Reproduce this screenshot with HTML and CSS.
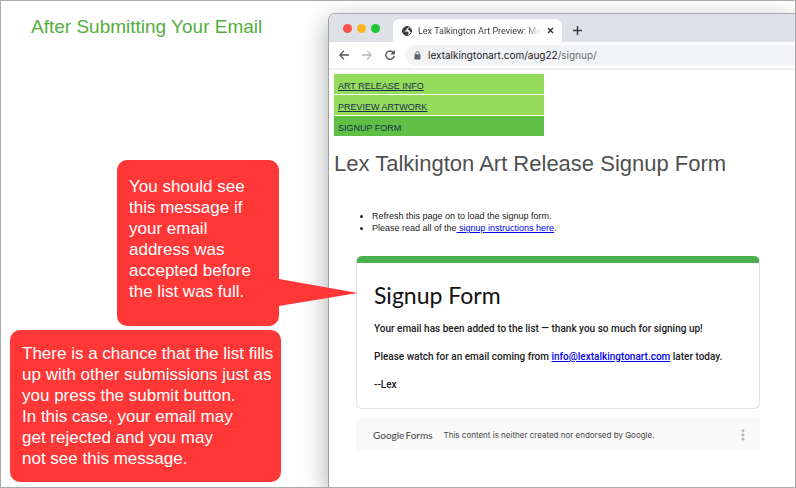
FILE: index.html
```html
<!DOCTYPE html>
<html lang="en">
<head>
    <meta charset="utf-8">
    <title>After Submitting Your Email</title>
    <link rel="stylesheet" href="styles.css">
</head>
<body>
    <div class="slide">
        <div class="notes">
            <h1 class="notes-title">After Submitting Your Email</h1>
            <div class="callout callout-success">
                You should see<br>this message if<br>your email<br>address was<br>accepted before<br>the list was full.
                <svg class="pointer" width="79" height="28" viewBox="0 0 79 28"><path d="M0 0L79 14L0 27Z" fill="#ff3737"/></svg>
            </div>
            <div class="callout callout-warning">
                There is a chance that the list fills<br>up with other submissions just as<br>you press the submit button.<br>In this case, your email may<br>get rejected and you may<br>not see this message.
            </div>
        </div>

        <div class="browser">
            <div class="tab-bar">
                <div class="lights">
                    <span class="light red"></span>
                    <span class="light yellow"></span>
                    <span class="light green"></span>
                </div>
                <div class="tab">
                    <svg width="10" height="10" viewBox="0 0 20 20"><circle cx="10" cy="10" r="9" fill="#fff" stroke="#3c4043" stroke-width="2"/><path d="M2 6C4 2 8 1 12 1V4L9 6V9H6L5 11H11L13 13V16L10 19C4 19 0 14 1 9ZM14 2L18 6L19 12H16L15 9L12 8L13 5Z" fill="#3c4043"/></svg>
                    <span class="tab-title">Lex Talkington Art Preview: Ma</span>
                    <button class="icon-btn" aria-label="Close tab"><svg width="7" height="7" viewBox="0 0 7 7"><path d="M1 1L6 6M6 1L1 6" stroke="#303236" stroke-width="1.4"/></svg></button>
                </div>
                <button class="icon-btn new-tab" aria-label="New tab"><svg width="9" height="9" viewBox="0 0 9 9"><path d="M4.5 0V9M0 4.5H9" stroke="#3c4043" stroke-width="1.5"/></svg></button>
            </div>
            <div class="toolbar">
                <button class="icon-btn" aria-label="Back"><svg width="10" height="10" viewBox="0 0 10 10" fill="none" stroke="#505357" stroke-width="1.3"><path d="M10 5H1M5 .6L.8 5L5 9.4"/></svg></button>
                <button class="icon-btn" aria-label="Forward"><svg width="10" height="10" viewBox="0 0 10 10" fill="none" stroke="#b5b7ba" stroke-width="1.3"><path d="M0 5H9M5 .6L9.2 5L5 9.4"/></svg></button>
                <button class="icon-btn" aria-label="Reload"><svg width="10" height="10" viewBox="0 0 10 10" fill="none"><path d="M8.6 2.9A4.2 4.2 0 1 0 9.2 6" stroke="#505357" stroke-width="1.4"/><path d="M9.8 0V4.4H5.4Z" fill="#505357"/></svg></button>
                <div class="address">
                    <svg width="7" height="9" viewBox="0 0 7 9"><rect x="0.5" y="3.3" width="6" height="5.2" rx="0.6" fill="#5f6368"/><path d="M1.8 3.5V2.3A1.7 1.7 0 0 1 5.2 2.3V3.5" fill="none" stroke="#5f6368"/></svg>
                    <span class="url">lextalkingtonart.com/aug22<span class="path">/signup/</span></span>
                </div>
            </div>

            <div class="page">
                <nav class="menu">
                    <a href="#">ART RELEASE INFO</a>
                    <a href="#">PREVIEW ARTWORK</a>
                    <a class="current">SIGNUP FORM</a>
                </nav>
                <h2 class="page-title">Lex Talkington Art Release Signup Form</h2>
                <ul class="tips">
                    <li>Refresh this page on to load the signup form.</li>
                    <li>Please read all of the<a href="#"> signup instructions here</a>.</li>
                </ul>
                <div class="form-card">
                    <h3>Signup Form</h3>
                    <p>Your email has been added to the list — thank you so much for signing up!</p>
                    <p>Please watch for an email coming from <a href="#">info@lextalkingtonart.com</a> later today.</p>
                    <p>--Lex</p>
                </div>
                <div class="form-footer">
                    <span class="brand">Google<span class="brand-forms">Forms</span></span>
                    <span class="disclaimer">This content is neither created nor endorsed by Google.</span>
                    <button class="icon-btn" aria-label="More"><svg width="4" height="12" viewBox="0 0 4 12" fill="#b4b4b4"><circle cx="2" cy="1.8" r="1.4"/><circle cx="2" cy="6" r="1.4"/><circle cx="2" cy="10.2" r="1.4"/></svg></button>
                </div>
            </div>
        </div>
    </div>
</body>
</html>
```
FILE: styles.css
```css
* { box-sizing: border-box; }
body {
    margin: 0;
    background: #fff;
    font-family: "Liberation Sans", Arial, sans-serif;
}
h1, h2, h3, p, ul { margin: 0; font-weight: normal; }
.slide {
    display: flex;
    min-height: 100vh;
    border: 1px solid #ababab;
    overflow: hidden;
}

/* left side notes */
.notes {
    flex: 0 0 327px;
    display: flex;
    flex-direction: column;
    align-items: flex-start;
    padding: 14px 0 5px 9px;
}
.notes-title {
    margin-left: 21px;
    font-size: 19px;
    line-height: 24px;
    color: #53ad3d;
}
.callout {
    position: relative;
    z-index: 1;
    border-radius: 10px;
    background: #ff3737;
    color: #fff;
    font-size: 17px;
    line-height: 21px;
    white-space: nowrap;
}
.callout-success {
    margin: 121px 0 4px 107px;
    padding: 16px 30px 24px 12px;
    width: 162px;
}
.callout-warning {
    padding: 13px 12px;
    width: 271px;
}
.pointer {
    position: absolute;
    left: 100%;
    top: 119px;
}

/* browser window */
.browser {
    flex: 1;
    min-width: 0;
    display: flex;
    flex-direction: column;
    margin-top: 12px;
    border-top: 1px solid #a9abae;
    border-left: 1px solid #a0a0a0;
    border-radius: 7px 0 0 0;
    background: #fff;
    box-shadow: 0 8px 26px rgba(0, 0, 0, 0.35);
}
.icon-btn {
    display: flex;
    padding: 0;
    border: none;
    background: none;
    cursor: pointer;
}
.tab-bar {
    display: flex;
    height: 28px;
    border-radius: 6px 0 0 0;
    background: #dee1e6;
}
.lights {
    display: flex;
    align-items: center;
    gap: 5px;
    padding: 0 13px 0 14px;
}
.light {
    width: 9px;
    height: 9px;
    border-radius: 50%;
}
.red { background: #fb4f47; }
.yellow { background: #fcb424; }
.green { background: #1fc735; }
.tab {
    display: flex;
    align-items: center;
    gap: 6px;
    width: 169px;
    margin-top: 5px;
    padding: 0 8px 0 9px;
    border-radius: 6px 6px 0 0;
    background: #fff;
}
.tab-title {
    flex: 1;
    overflow: hidden;
    white-space: nowrap;
    font: 9px/12px Roboto, sans-serif;
    color: #3c4043;
    -webkit-mask-image: linear-gradient(to right, #000 86%, transparent);
    mask-image: linear-gradient(to right, #000 86%, transparent);
}
.new-tab {
    align-items: center;
    margin: 5px 0 0 11px;
}
.toolbar {
    display: flex;
    align-items: center;
    gap: 13px;
    padding: 3px 0 3px 10px;
    border-bottom: 2px solid #eeeff0;
}
.address {
    flex: 1;
    display: flex;
    align-items: center;
    gap: 7px;
    height: 20px;
    margin-left: -3px;
    padding-left: 9px;
    border-radius: 10px 0 0 10px;
    background: #f1f3f4;
}
.url {
    font: 10px/14px Inter, sans-serif;
    color: #202124;
}
.path { color: #6a6d71; }

/* page shown in the window */
.page { padding: 4px 35px 20px 5px; }
.menu {
    display: flex;
    flex-direction: column;
    gap: 1px;
    width: 210px;
}
.menu a {
    padding: 5px 4px 1px;
    background: #95dc5d;
    font-size: 9px;
    line-height: 14px;
    color: #17304d;
}
.menu .current { background: #60bf45; }
.page-title {
    margin-top: 14px;
    font-size: 22px;
    line-height: 28px;
    color: #505050;
}
.tips {
    margin-top: 32px;
    padding-left: 38px;
    font-size: 9px;
    line-height: 12px;
    color: #222;
}
a[href] { text-decoration: underline; }
.tips a, .form-card a { color: #0000ee; }
.form-card {
    margin: 22px 0 9px 22px;
    padding: 16px 17px;
    border: 1px solid #dfe1e5;
    border-top: 7px solid #4caf50;
    border-radius: 6px;
    font-family: Roboto, sans-serif;
}
.form-card h3 {
    margin-bottom: 11px;
    font: 23px/32px Lato, sans-serif;
    color: #111;
}
.form-card p {
    font-size: 10px;
    font-weight: 500;
    line-height: 14px;
    color: #202124;
}
.form-card p + p { margin-top: 14px; }
.form-footer {
    display: flex;
    align-items: center;
    height: 33px;
    margin-left: 22px;
    padding: 0 15px 0 17px;
    border-radius: 3px;
    background: #f9f9f9;
    font: 8px/12px Inter, sans-serif;
    color: #444;
}
.brand {
    margin-right: 11px;
    font: 10px/14px Lato, sans-serif;
}
.brand-forms { margin-left: 1px; }
.disclaimer { flex: 1; }
```
